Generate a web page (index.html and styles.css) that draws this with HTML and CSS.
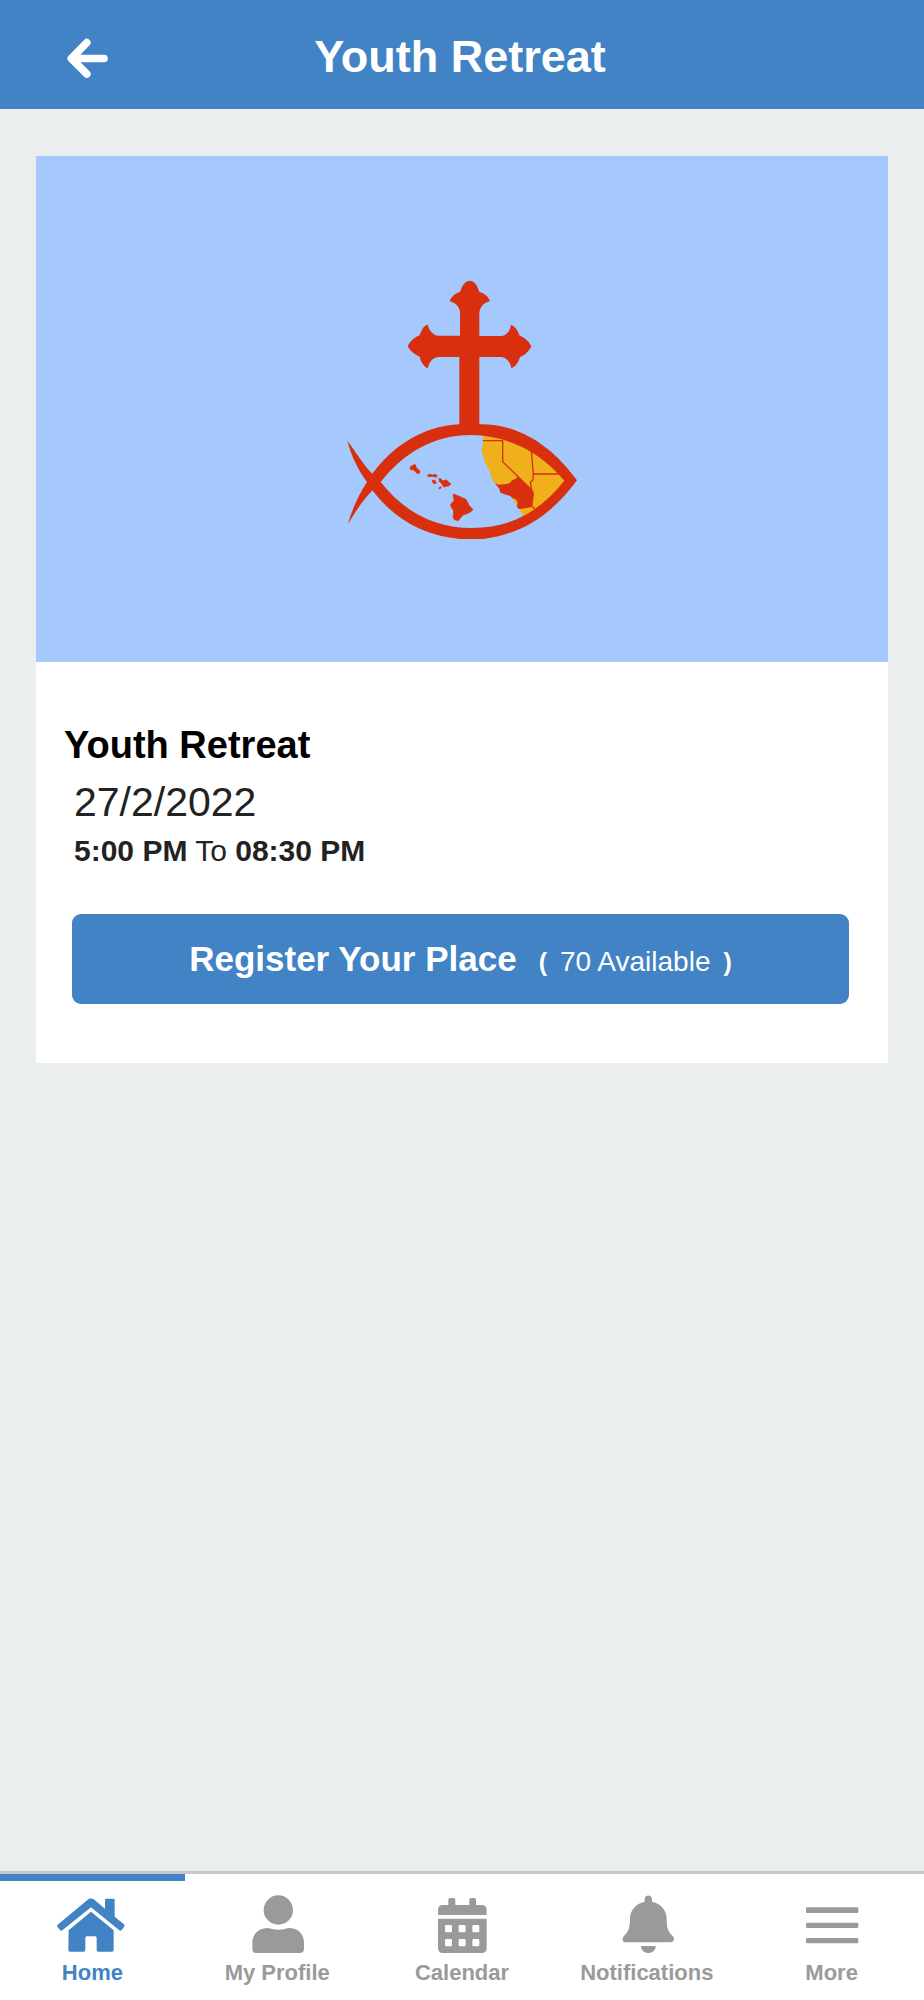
FILE: index.html
```html
<!DOCTYPE html>
<html lang="en">
<head>
<meta charset="utf-8">
<meta name="viewport" content="width=device-width, initial-scale=1">
<title>Youth Retreat</title>
<link rel="stylesheet" href="styles.css">
</head>
<body>
<header class="topbar">
  <button class="back" type="button" aria-label="Back">
    <svg viewBox="20 24 124 124" aria-hidden="true"><path d="M132 86H36M80 38L33 86l47 47" /></svg>
  </button>
  <h1 class="topbar-title">Youth Retreat</h1>
</header>

<main class="content">
  <article class="card">
    <div class="cover">
      <svg class="logo" viewBox="48 56 696 786" role="img" aria-label="Cross and fish emblem">
        <path class="gold" d="M459 515V548L454 573L461 588L462 603L468 609L471 620L478 629L483 645L487 660L495 669L530 690L560 735L568 744L582 772L640 760L730 661L600 540Z"/>
        <path class="border" d="M458 541H518V604L606 690M604 570L610 641H690M610 641L608 661L601 665L604 685L610 700L605 737L614 746M568 744L603 739"/>
        <path class="red" d="M495 669L507 673L530 671L540 667L546 660L556 656L563 650L606 688L610 700L606 738L597 740L566 746L561 739L563 727L559 718L546 712L540 706L530 704L511 697L508 685Z"/>
        <path class="red" fill-rule="evenodd" d="M127 640C190 555 280 498 388 492V290H325C307 292 297 307 294 323C284 322 272 305 269 289C252 283 238 268 233 258C240 243 254 230 269 225C274 208 283 194 293 193C297 209 309 225 325 226H390V155C388 139 376 127 359 123C364 108 376 99 390 95C397 73 407 61 419 61C432 61 442 73 448 95C463 99 475 108 480 123C462 127 451 139 448 156V227H515C531 225 541 210 543 193C554 197 564 210 569 226C585 231 598 244 604 258C598 271 586 285 570 290C565 307 555 321 544 323C541 306 531 292 515 290H448V492C570 490 668 560 741 660C670 755 590 818 460 836H390C275 825 190 772 127 690C98 720 75 757 54 790C65 750 85 705 111 665C85 630 65 590 52 542C75 570 98 612 127 640ZM152 665C220 578 310 524 425 524C540 526 635 580 703 661C630 752 545 803 425 803C310 803 220 752 152 665Z"/>
        <g class="red islands">
          <path d="M240 621L246 616L255 612L260 624L269 631L270 637L262 640L251 629L242 628Z"/>
          <path d="M293 644L299 642L308 644L315 642L322 646L318 651L308 648L295 649Z"/>
          <path d="M307 660L315 660L319 668L313 671L308 666Z"/>
          <path d="M327 654L332 655L338 661L350 659L356 666L363 671L357 676L341 680L334 669L328 664Z"/>
          <path d="M326 683L332 679L334 682L329 686Z"/>
          <path d="M369 702L376 703L390 709L408 717L417 735L429 748L418 757L398 765L385 781L373 778L369 771L371 752L361 735L365 728L372 721Z"/>
        </g>
      </svg>
    </div>
    <div class="details">
      <h2 class="event-title">Youth Retreat</h2>
      <p class="event-date">27/2/2022</p>
      <p class="event-time"><b>5:00 PM</b> To <b>08:30 PM</b></p>
      <button class="register" type="button">
        <span>Register Your Place</span>
        <span class="places"><b>(</b><span>70 Available</span><b>)</b></span>
      </button>
    </div>
  </article>
</main>

<nav class="tabs" aria-label="Main">
  <a class="tab active" href="#home" aria-current="page">
    <svg viewBox="169 105 216 180" aria-hidden="true">
      <path d="M174 194L264 119Q274 112 284 119L316 146V120Q316 116 320 116H341Q345 116 345 120V170L373 193Q377 197 373 201L366 210Q362 214 358 210L274 142L189 210Q185 214 181 210L174 202Q170 198 174 194Z"/>
      <path d="M207 211L274 155L342 211V270Q342 275 337 275H296Q291 275 291 270V234Q291 229 286 229H262Q257 229 257 234V270Q257 275 252 275H211Q206 275 206 270Z"/>
    </svg>
    <span>Home</span>
  </a>
  <a class="tab" href="#profile">
    <svg viewBox="722 105 216 180" aria-hidden="true">
      <circle cx="834" cy="150" r="44"/>
      <path d="M803 204Q834 214 865 204C893 204 911 222 911 248V266Q911 279 898 279H769Q756 279 756 266V248C756 222 775 204 803 204Z"/>
    </svg>
    <span>My Profile</span>
  </a>
  <a class="tab" href="#calendar">
    <svg viewBox="0 15 216 180" aria-hidden="true">
      <path d="M36 75V60Q36 45 51 45H67V29Q67 24 72 24H83Q88 24 88 29V45H130V29Q130 24 135 24H145Q150 24 150 29V45H167Q182 45 182 60V75Z"/>
      <path fill-rule="evenodd" d="M36 86H182V174Q182 189 167 189H51Q36 189 36 174ZM61 105h13q4 0 4 4v14q0 4-4 4h-13q-4 0-4-4v-14q0-4 4-4zM102 105h13q4 0 4 4v14q0 4-4 4h-13q-4 0-4-4v-14q0-4 4-4zM143 105h13q4 0 4 4v14q0 4-4 4h-13q-4 0-4-4v-14q0-4 4-4zM61 147h13q4 0 4 4v14q0 4-4 4h-13q-4 0-4-4v-14q0-4 4-4zM102 147h13q4 0 4 4v14q0 4-4 4h-13q-4 0-4-4v-14q0-4 4-4zM143 147h13q4 0 4 4v14q0 4-4 4h-13q-4 0-4-4v-14q0-4 4-4z"/>
    </svg>
    <span>Calendar</span>
  </a>
  <a class="tab" href="#notifications">
    <svg viewBox="0 15 216 180" aria-hidden="true">
      <path d="M101 35V28C101 13 123 13 123 28V35C150 41 167 61 167 86C167 114 170 123 185 138C193 146 188 157 179 157H44C35 157 31 146 39 138C53 124 57 112 57 86C57 61 74 41 101 35ZM90 168H134C134 196 90 196 90 168Z"/>
    </svg>
    <span>Notifications</span>
  </a>
  <a class="tab" href="#more">
    <svg viewBox="0 15 216 180" aria-hidden="true">
      <path d="M34 52h149q4 0 4 4v9q0 4-4 4h-149q-4 0-4-4v-9q0-4 4-4zM34 98h149q4 0 4 4v8q0 4-4 4h-149q-4 0-4-4v-8q0-4 4-4zM34 144h149q4 0 4 4v8q0 4-4 4h-149q-4 0-4-4v-8q0-4 4-4z"/>
    </svg>
    <span>More</span>
  </a>
</nav>
</body>
</html>
```

FILE: styles.css
```css
* {
  box-sizing: border-box;
}

body {
  margin: 0;
  min-height: 100vh;
  display: flex;
  flex-direction: column;
  background: #eaeeef;
  color: #222;
  font-family: "Liberation Sans", Arial, sans-serif;
}

h1,
h2,
p {
  margin: 0;
}

button {
  border: 0;
  font: inherit;
  color: inherit;
  cursor: pointer;
}

.topbar {
  display: grid;
  grid-template-columns: 108px 1fr 112px;
  align-items: center;
  padding: 28px 0 24px;
  background: #4183c4;
  color: #fff;
}

.back {
  display: flex;
  justify-content: flex-end;
  padding: 4px 0 0;
  background: none;
}

.back svg {
  width: 41px;
  height: 41px;
  fill: none;
  stroke: currentColor;
  stroke-width: 23;
  stroke-linecap: round;
  stroke-linejoin: round;
}

.topbar-title {
  font-size: 45px;
  line-height: 57px;
  text-align: center;
}

.content {
  flex: 1;
  padding: 47px 36px;
}

.card {
  background: #fff;
}

.cover {
  display: flex;
  justify-content: center;
  padding: 123px 0 121px;
  background: #a5c8fd;
}

.logo {
  width: 232px;
  height: 262px;
}

.gold {
  fill: #efb01c;
}

.red {
  fill: #d8300f;
}

.islands {
  stroke: #d8300f;
  stroke-width: 2;
  stroke-linejoin: round;
}

.border {
  fill: none;
  stroke: #d8300f;
  stroke-width: 4;
}

.details {
  display: flex;
  flex-direction: column;
  padding: 55px 39px 59px 28px;
}

.event-title {
  color: #000;
  font-size: 38px;
  line-height: 56px;
}

.event-date,
.event-time {
  padding-left: 10px;
}

.event-date {
  font-size: 41px;
  line-height: 58px;
}

.event-time {
  font-size: 30px;
  line-height: 40px;
}

.register {
  display: flex;
  flex-wrap: wrap;
  justify-content: center;
  align-items: baseline;
  gap: 22px;
  margin: 43px 0 0 8px;
  padding: 24px 0;
  border-radius: 9px;
  background: #4183c4;
  color: #fff;
  font-size: 35px;
  font-weight: bold;
  line-height: 42px;
}

.places {
  display: flex;
  align-items: baseline;
  gap: 13px;
  font-size: 28px;
  font-weight: normal;
  line-height: 30px;
}

.places b {
  font-size: 25px;
}

.tabs {
  display: grid;
  grid-template-columns: repeat(5, 1fr);
  border-top: 3px solid #c8c8c8;
  background: #fff;
}

.tab {
  display: flex;
  flex-direction: column;
  align-items: center;
  gap: 5px;
  padding: 14px 0;
  border-top: 7px solid transparent;
  color: #9a9a9a;
  font-size: 22px;
  font-weight: bold;
  line-height: 26px;
  text-decoration: none;
}

.tab svg {
  width: 72px;
  height: 60px;
  fill: currentColor;
}

.active {
  border-top-color: #4183c4;
  color: #4183c4;
}
```
